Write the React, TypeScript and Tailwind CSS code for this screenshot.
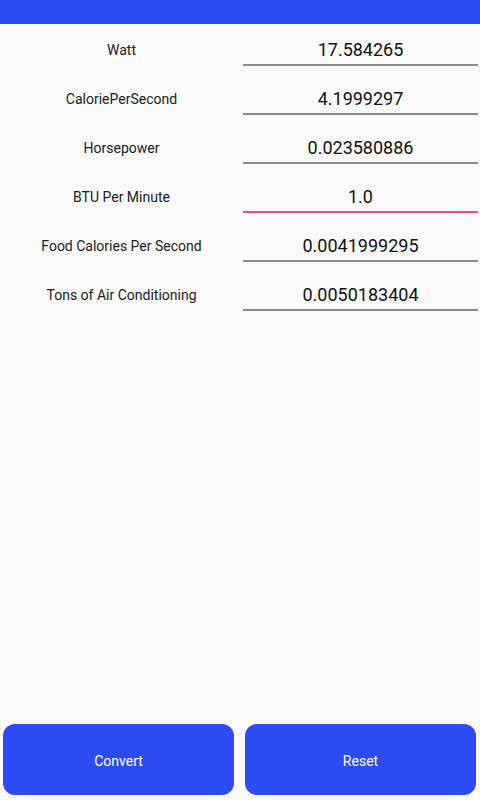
import { useState } from "react";

const rows = [
  { label: "Watt", value: "17.584265" },
  { label: "CaloriePerSecond", value: "4.1999297" },
  { label: "Horsepower", value: "0.023580886" },
  { label: "BTU Per Minute", value: "1.0", focused: true },
  { label: "Food Calories Per Second", value: "0.0041999295" },
  { label: "Tons of Air Conditioning", value: "0.0050183404" },
];

export default function App() {
  const [values, setValues] = useState(rows.map((r) => r.value));

  return (
    <div className="w-[480px] h-[800px] bg-[#fafafa] flex flex-col font-['Roboto',sans-serif] overflow-hidden">
      {/* Status/action bar */}
      <div className="h-[24px] bg-[#2d4bf4] shrink-0" />

      {/* Unit rows */}
      <div className="flex-1 flex flex-col">
        {rows.map((row, i) => (
          <div key={row.label} className="h-[49px] flex">
            <div className="w-[243px] h-[42px] pt-[14px] text-center text-[14px] leading-[24px] text-[#212121]">
              {row.label}
            </div>
            <div
              className={`w-[235px] h-[42px] pt-[14px] border-b-2 ${row.focused ? "border-[#ff4081]" : "border-[#8c8c8c]"}`}
            >
              <input
                value={values[i]}
                onChange={(e) => {
                  const next = [...values];
                  next[i] = e.target.value;
                  setValues(next);
                }}
                className="w-full bg-transparent outline-none text-center text-[18px] leading-[24px] h-[24px] text-[#111]"
              />
            </div>
          </div>
        ))}
      </div>

      {/* Buttons */}
      <div className="flex gap-[11px] pl-[3px] pb-[5px]">
        <button className="w-[231px] h-[71px] pt-[3px] rounded-[12px] bg-[#2d4bf4] text-white text-[14px]">
          Convert
        </button>
        <button className="w-[231px] h-[71px] pt-[3px] rounded-[12px] bg-[#2d4bf4] text-white text-[14px]">
          Reset
        </button>
      </div>
    </div>
  );
}
